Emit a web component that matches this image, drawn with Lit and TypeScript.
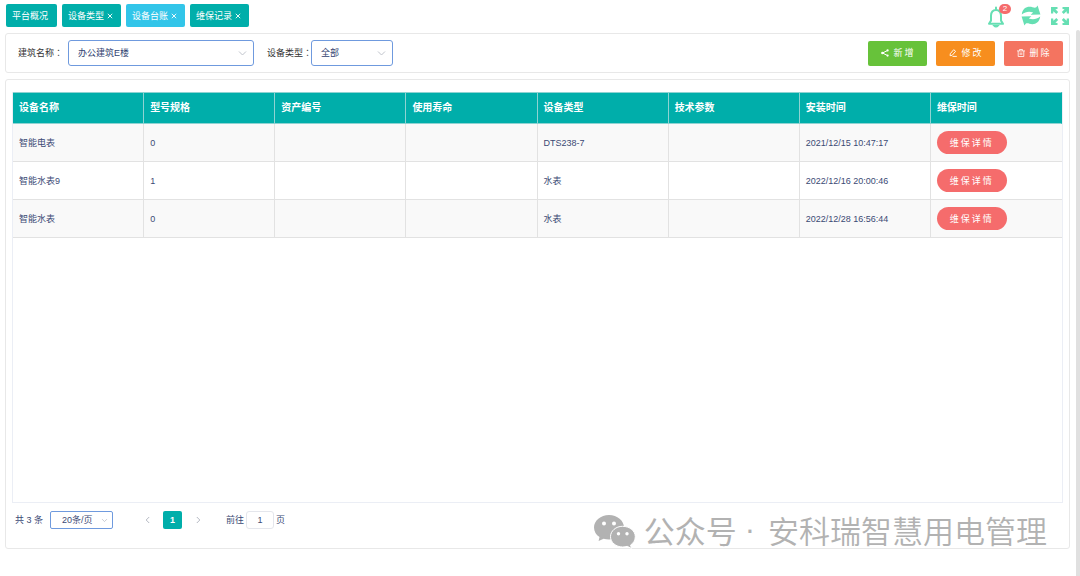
import { LitElement, html, css, svg } from "lit";
import { customElement, property, state } from "lit/decorators.js";
import { classMap } from "lit/directives/class-map.js";

interface Device {
  name: string;
  model: string;
  type: string;
  installed: string;
}

const TABS = [
  { label: "平台概况", closable: false },
  { label: "设备类型", closable: true },
  { label: "设备台账", closable: true },
  { label: "维保记录", closable: true },
];

const COLUMNS = ["设备名称", "型号规格", "资产编号", "使用寿命", "设备类型", "技术参数", "安装时间", "维保时间"];

const DEVICES: Device[] = [
  { name: "智能电表", model: "0", type: "DTS238-7", installed: "2021/12/15 10:47:17" },
  { name: "智能水表9", model: "1", type: "水表", installed: "2022/12/16 20:00:46" },
  { name: "智能水表", model: "0", type: "水表", installed: "2022/12/28 16:56:44" },
];

const base = css`
  * {
    box-sizing: border-box;
  }
  button,
  input,
  select {
    font: inherit;
    color: inherit;
    margin: 0;
    padding: 0;
    border: 0;
    background: none;
  }
  button {
    cursor: pointer;
  }
  svg {
    display: block;
    flex: none;
  }
`;

const chevron = svg`<path d="M1 1.5 4.5 5 8 1.5" fill="none" stroke="currentColor" stroke-width="1"/>`;

@customElement("tab-bar")
class TabBar extends LitElement {
  @state() private active = 2;

  static styles = [
    base,
    css`
      :host {
        display: flex;
        align-items: flex-start;
        justify-content: space-between;
        height: 33px;
        padding: 4px 10px 0 6px;
      }
      .tabs {
        display: flex;
        gap: 5px;
      }
      .tab {
        display: flex;
        align-items: center;
        height: 23px;
        padding: 0 8px 0 6px;
        border-radius: 2px;
        background: #00aeaa;
        color: #fff;
        white-space: nowrap;
      }
      .tab:first-child {
        padding-right: 9px;
      }
      .active {
        background: #32c5e9;
      }
      .close {
        margin-left: 3px;
      }
      .tools {
        display: flex;
        align-items: flex-start;
        color: #66dfb3;
      }
      .tool {
        display: block;
        position: relative;
      }
      .bell {
        margin: 2px 16px 0 0;
      }
      .refresh {
        margin: 1px 9px 0 0;
      }
      .full {
        margin-top: 3px;
      }
      .badge {
        position: absolute;
        top: -2px;
        right: -6px;
        min-width: 12px;
        height: 10px;
        border-radius: 5px;
        background: #f56c6c;
        color: #fff;
        font-size: 8px;
        line-height: 10px;
        text-align: center;
      }
    `,
  ];

  render() {
    return html`
      <nav class="tabs">
        ${TABS.map(
          (t, i) => html`<button
            class=${classMap({ tab: true, active: i === this.active })}
            @click=${() => (this.active = i)}
          >
            ${t.label}${t.closable
              ? html`<svg class="close" width="6" height="6" viewBox="0 0 6 6">
                  <path d="M.8.8 5.2 5.2M5.2.8.8 5.2" stroke="#fff" stroke-width=".9" />
                </svg>`
              : ""}
          </button>`
        )}
      </nav>
      <div class="tools">
        <button class="tool bell" aria-label="消息">
          <svg width="18" height="22" viewBox="0 0 18 22" fill="none" stroke="currentColor" stroke-width="2">
            <path d="M9 1.600v2.400M2 17.800 4 14.600V9.800C4.100 6.200 6 4 9 4s4.900 2.200 5 5.800v4.800l2 3.200Z" stroke-linecap="round" stroke-linejoin="round" />
            <path d="M6.600 19.600q2.400 2.800 4.800 0Z" fill="currentColor" stroke-width="1.200" />
          </svg>
          <span class="badge">2</span>
        </button>
        <button class="tool refresh" aria-label="刷新">
          <svg width="20" height="21" viewBox="0 0 20 21" fill="currentColor">
            <path d="M.8 9.400C1.500 3 6.500.8 11.500 2.200c1.600.5 2.900.6 3.800.1L16.600.6 19.400 9.600l-9.800.2 2.600-2.300C8.300 6 4.500 6.500.8 9.400Z" />
            <path d="M19.200 11.600C18.500 18 13.500 20.200 8.500 18.800c-1.600-.5-2.900-.6-3.800-.1L3.400 20.400.6 11.400l9.800-.2-2.600 2.300c3.900 1.500 7.700 1 11.400-1.900Z" />
          </svg>
        </button>
        <button class="tool full" aria-label="全屏">
          <svg width="20" height="19" viewBox="0 0 20 19" fill="currentColor">
            <path d="M1 0h6.500v2L5.400 2.300 8.200 5 6.300 6.900 3.400 4.200 3.200 6.500H1ZM19 0h-6.500v2l2.100.3L11.800 5l1.900 1.900 2.900-2.700.2 2.300H19ZM1 18h6.500v-2l-2.100-.3L8.200 13l-1.900-1.900-2.900 2.700-.2-2.300H1ZM19 18h-6.500v-2l2.100-.3-2.800-2.700 1.900-1.900 2.900 2.700.2-2.300H19Z" />
          </svg>
        </button>
      </div>
    `;
  }
}

@customElement("filter-bar")
class FilterBar extends LitElement {
  static styles = [
    base,
    css`
      :host {
        display: flex;
        align-items: center;
        justify-content: space-between;
        height: 40px;
        margin: 0 10px 0 5px;
        padding: 0 6px 0 12px;
        border: 1px solid #e8e8e8;
        border-radius: 3px;
        color: #333;
      }
      .fields,
      .actions {
        display: flex;
        align-items: center;
      }
      .actions {
        gap: 9px;
      }
      .colon {
        font-family: "Noto Sans CJK TC", sans-serif;
      }
      .box {
        display: grid;
        align-items: center;
        height: 26px;
        margin: 0 13px 0 5px;
        border: 1px solid #6f9ade;
        border-radius: 3px;
        color: #2f4270;
      }
      .building {
        width: 186px;
      }
      .kind {
        width: 82px;
        margin-left: -1px;
      }
      .box > * {
        grid-area: 1 / 1;
      }
      .box select {
        appearance: none;
        width: 100%;
        height: 100%;
        padding-left: 9px;
      }
      .box svg {
        justify-self: end;
        margin-right: 6px;
        color: #c0c4cc;
        pointer-events: none;
      }
      .action {
        display: flex;
        align-items: center;
        justify-content: center;
        gap: 4px;
        width: 59px;
        height: 25px;
        padding-left: 2px;
        border-radius: 2px;
        color: #fff;
        letter-spacing: 2px;
      }
      .add {
        background: #67c23a;
      }
      .edit {
        background: #f78e1e;
      }
      .remove {
        background: #f47460;
      }
    `,
  ];

  render() {
    return html`
      <div class="fields">
        <label for="building">建筑名称<span class="colon">：</span></label>
        <div class="box building">
          <select id="building"><option>办公建筑E楼</option></select>
          <svg width="9" height="7" viewBox="0 0 9 7">${chevron}</svg>
        </div>
        <label for="kind">设备类型<span class="colon">：</span></label>
        <div class="box kind">
          <select id="kind"><option>全部</option></select>
          <svg width="9" height="7" viewBox="0 0 9 7">${chevron}</svg>
        </div>
      </div>
      <div class="actions">
        <button class="action add">
          <svg width="8" height="8" viewBox="0 0 8 8" fill="none" stroke="#fff">
            <path d="M6.500 1.500 1.500 4l5 2.500" />
            <g fill="#fff" stroke="none"><circle cx="6.600" cy="1.400" r="1.100" /><circle cx="1.400" cy="4" r="1.300" /><circle cx="6.600" cy="6.600" r="1.100" /></g>
          </svg>新增
        </button>
        <button class="action edit">
          <svg width="8" height="8" viewBox="0 0 8 8" fill="none" stroke="#fff" stroke-width=".9">
            <path d="m1.300 4.700 3.400-4 1.900 1.600-3.400 4-2.100.4ZM3.500 7.400h4.300" />
          </svg>修改
        </button>
        <button class="action remove">
          <svg width="8" height="8" viewBox="0 0 8 8" fill="none" stroke="#fff" stroke-width=".8">
            <path d="M0 1.900h8M2.500 1.800V.5h3v1.300M1.200 2v5.500h5.600V2M3.200 3.500v2.500M4.800 3.500v2.500" />
          </svg>删除
        </button>
      </div>
    `;
  }
}

@customElement("device-table")
class DeviceTable extends LitElement {
  @property({ attribute: false }) rows: Device[] = [];

  static styles = [
    base,
    css`
      :host {
        display: block;
        flex: 1;
        border: 1px solid #ebeef5;
        border-top: 0;
        color: #3b4a75;
      }
      table {
        width: 100%;
        table-layout: fixed;
        border-collapse: separate;
        border-spacing: 0;
      }
      th,
      td {
        padding: 0 6px;
        text-align: left;
        border: solid #e2e2e2;
        border-width: 0 1px 1px 0;
      }
      th {
        height: 32px;
        background: #00aeaa;
        border-color: #8fd3d2;
        border-top-width: 1px;
        color: #fff;
        font-size: 10px;
      }
      th:last-child {
        border-right-color: #00aeaa;
      }
      td:last-child {
        border-right: 0;
      }
      td {
        height: 38px;
      }
      tr:nth-child(odd) td {
        background: #f9f9f9;
      }
      .detail {
        display: block;
        width: 70px;
        height: 23px;
        border-radius: 12px;
        background: #f56c6c;
        color: #fff;
        letter-spacing: 2px;
      }
    `,
  ];

  render() {
    return html`<table>
      <thead>
        <tr>${COLUMNS.map((c) => html`<th scope="col">${c}</th>`)}</tr>
      </thead>
      <tbody>
        ${this.rows.map(
          (r) => html`<tr>
            <td>${r.name}</td>
            <td>${r.model}</td>
            <td></td>
            <td></td>
            <td>${r.type}</td>
            <td></td>
            <td>${r.installed}</td>
            <td><button class="detail">维保详情</button></td>
          </tr>`
        )}
      </tbody>
    </table>`;
  }
}

@customElement("page-nav")
class PageNav extends LitElement {
  static styles = [
    base,
    css`
      :host {
        display: flex;
        align-items: center;
        height: 18px;
        margin: 8px 0 19px 3px;
        color: #3b4a75;
      }
      .size {
        display: grid;
        align-items: center;
        width: 63px;
        height: 18px;
        margin: 0 28px 0 7px;
        border: 1px solid #6f9ade;
        border-radius: 2px;
      }
      .size > * {
        grid-area: 1 / 1;
      }
      .size select {
        appearance: none;
        width: 100%;
        height: 100%;
        padding-left: 11px;
      }
      .size svg {
        justify-self: end;
        margin-right: 4px;
        pointer-events: none;
      }
      svg {
        color: #b4b8c2;
      }
      .arrow {
        display: grid;
        place-items: center;
        width: 12px;
        height: 18px;
      }
      .current {
        width: 19px;
        height: 18px;
        margin: 0 10px;
        border-radius: 2px;
        background: #00aeaa;
        color: #fff;
        font-weight: 700;
      }
      .jump {
        display: flex;
        align-items: center;
        gap: 2px;
        margin-left: 22px;
      }
      .jump input {
        width: 28px;
        height: 18px;
        border: 1px solid #e4e6ec;
        border-radius: 3px;
        text-align: center;
      }
    `,
  ];

  render() {
    return html`
      <span>共 3 条</span>
      <div class="size">
        <select aria-label="每页条数"><option>20条/页</option></select>
        <svg width="7" height="5" viewBox="0 0 9 7">${chevron}</svg>
      </div>
      <button class="arrow" aria-label="上一页">
        <svg width="5" height="8" viewBox="0 0 5 8"><path d="M4.200 1 1.200 4l3 3" fill="none" stroke="currentColor" /></svg>
      </button>
      <button class="current">1</button>
      <button class="arrow" aria-label="下一页">
        <svg width="5" height="8" viewBox="0 0 5 8"><path d="m.8 1 3 3-3 3" fill="none" stroke="currentColor" /></svg>
      </button>
      <div class="jump">
        <label for="page">前往</label>
        <input id="page" value="1" />
        <span>页</span>
      </div>
    `;
  }
}

@customElement("app-root")
class AppRoot extends LitElement {
  static styles = [
    base,
    css`
      :host {
        display: grid;
        grid-template-columns: 1fr 4px;
        position: relative;
        min-height: 100vh;
        background: #fff;
        font: 9px/12px "Liberation Sans", "Noto Sans CJK SC", sans-serif;
      }
      .page {
        display: flex;
        flex-direction: column;
        min-width: 0;
        grid-area: 1 / 1 / 2 / 3;
      }
      .panel {
        display: flex;
        flex: 1;
        flex-direction: column;
        margin: 6px 10px 27px 5px;
        padding: 12px 6px 0;
        border: 1px solid #e8e8e8;
        border-radius: 3px;
      }
      .scroll {
        grid-area: 1 / 2;
        margin-top: 30px;
        border-radius: 3px 3px 0 0;
        background: #e0e0e0;
      }
      .mark {
        display: flex;
        align-items: center;
        position: absolute;
        right: 33px;
        bottom: 24px;
        gap: 8px;
        color: #b2b2b2;
        font: 31px/44px "Noto Sans CJK SC", sans-serif;
        white-space: nowrap;
        pointer-events: none;
      }
      .mark svg {
        margin-top: 4px;
      }
      .account {
        display: flex;
      }
      .dot {
        margin: 0 13px 0 8px;
        font-family: "Liberation Sans", sans-serif;
      }
      .light {
        font-weight: 350;
      }
    `,
  ];

  render() {
    return html`
      <main class="page">
        <tab-bar></tab-bar>
        <filter-bar></filter-bar>
        <section class="panel">
          <device-table .rows=${DEVICES}></device-table>
          <page-nav></page-nav>
        </section>
      </main>
      <div class="scroll"></div>
      <div class="mark">
        <svg width="42" height="34" viewBox="0 0 42 34">
          <path d="M15 0C6.700 0 0 5.600 0 12.500c0 3.900 2.100 7.300 5.500 9.600L4.600 26l5-2.200c1.700.5 3.500.8 5.400.8C23.300 24.600 30 19.300 30 12.500S23.300 0 15 0Z" fill="#b2b2b2" />
          <path d="M28.500 11.300C22 11.300 16.500 15.900 16.500 21.700S22 32 28.700 32c1.600 0 3.100-.2 4.500-.7l4.300 2.200-.9-3.500c2.900-1.900 4.700-4.900 4.700-8.300 0-5.800-5.700-10.400-12.800-10.400Z" fill="#b2b2b2" stroke="#fff" />
          <g fill="#fff"><circle cx="10" cy="8.500" r="2" /><circle cx="20" cy="8.500" r="2" /><circle cx="24.500" cy="18.700" r="1.700" /><circle cx="33" cy="18.700" r="1.700" /></g>
        </svg>
        <div class="account"><span>公众号</span><span class="dot">·</span><span class="light">安科瑞智慧用电管理</span></div>
      </div>
    `;
  }
}
